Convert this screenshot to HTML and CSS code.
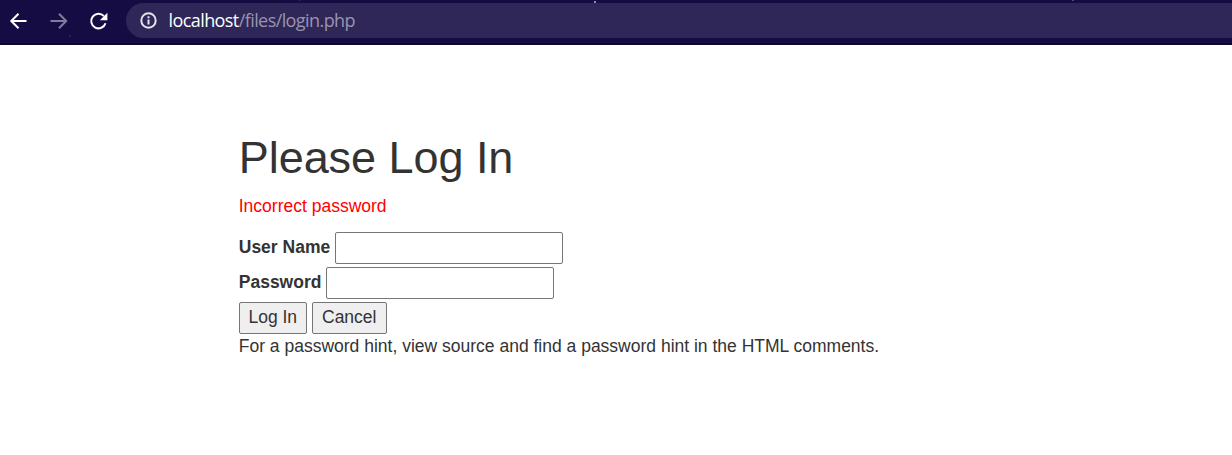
FILE: index.html
```html
<!DOCTYPE html>
<html lang="en">
<head>
<meta charset="utf-8">
<title>Login</title>
<link rel="stylesheet" href="styles.css">
</head>
<body>
<header class="toolbar">
  <nav class="nav">
    <svg class="icon" viewBox="0 0 20 20"><path d="M18.5 10H3M10.5 2.8 3.3 10l7.2 7.2"/></svg>
    <svg class="icon icon-dim" viewBox="0 0 20 20"><path d="M2.5 10H18M11 2.8l7.2 7.2-7.2 7.2"/></svg>
    <svg class="icon" viewBox="0 0 20 20"><path d="M17.5 12.2A7.3 7.3 0 1 1 15.9 5.1"/><path class="solid" d="M19.4 1.8v7.5h-7.5z"/></svg>
  </nav>
  <div class="address">
    <svg class="info" viewBox="0 0 18 18"><circle cx="8.5" cy="8.5" r="7.2"/><path d="M8.5 7.5v5M8.5 4.3v2"/></svg>
    <span class="url"><span class="host">localhost</span>/files/login.php</span>
  </div>
</header>
<main class="container">
  <h1 class="title">Please Log In</h1>
  <p class="error">Incorrect password</p>
  <form class="form">
    <div class="row"><label class="label" for="nam">User Name</label><input class="field" type="text" id="nam"></div>
    <div class="row"><label class="label" for="pw">Password</label><input class="field" type="password" id="pw"></div>
    <div class="actions"><button class="button login" type="button">Log In</button><button class="button cancel" type="button">Cancel</button></div>
  </form>
  <p class="hint">For a password hint, view source and find a password hint in the HTML comments.</p>
</main>
</body>
</html>
```
FILE: styles.css
```css
* { box-sizing: border-box; }
body {
  margin: 0;
  background: #fff;
  color: #333;
  font: 17.5px/25px "Liberation Sans", Arial, sans-serif;
  overflow: hidden;
}
/* starry theme: a few faint specks along the top edge */
.toolbar {
  display: flex;
  height: 45px;
  padding: 3px 0 0 8px;
  background:
    linear-gradient(#8f8bb5, #8f8bb5) 594px 1px / 2px 2px no-repeat,
    linear-gradient(#4d4678, #4d4678) 1072px 0 / 2px 1px no-repeat,
    linear-gradient(#3a3268, #3a3268) 299px 0 / 1px 1px no-repeat,
    linear-gradient(#2c2358, #2c2358) 69px 35px / 2px 2px no-repeat,
    #160c44;
  border-bottom: 2px solid #10062f;
}
.nav {
  display: flex;
  gap: 20px;
  width: 118px;
  height: 35px;
  align-items: center;
}
.icon {
  width: 20px;
  height: 20px;
  fill: none;
  stroke: #fff;
  stroke-width: 2;
}
.icon-dim { stroke: #827b9c; }
.solid { fill: #fff; stroke: none; }
.address {
  display: flex;
  flex: 1;
  align-items: center;
  height: 35px;
  padding-left: 14px;
  border-radius: 18px 0 0 18px;
  background: #2f2757;
}
.info {
  width: 18px;
  height: 18px;
  margin-right: 10.5px;
  fill: none;
  stroke: #e5e3ec;
  stroke-width: 2;
}
.url {
  color: #9994ae;
  font: 18px/24px "Open Sans", "Noto Sans", sans-serif;
  letter-spacing: -0.58px;
  padding-bottom: 1px;
  white-space: nowrap;
}
.host { color: #fff; }
.container { padding: 88px 0 0 238.75px; }
.title {
  margin: 0 0 12px;
  font-size: 45px;
  font-weight: 400;
  line-height: 49px;
  letter-spacing: -0.05px;
}
.error {
  margin: 0 0 13px;
  color: #f00;
}
.row {
  display: flex;
  gap: 4.5px;
  height: 35px;
}
.label {
  font-weight: 700;
  line-height: 30px;
}
.field {
  width: 228px;
  height: 32px;
  border: 1px solid #767676;
  border-radius: 2px;
  background: #fff;
}
.actions {
  display: flex;
  gap: 5px;
}
.button {
  height: 32px;
  padding: 0 0 2px;
  border: 1px solid #767676;
  border-radius: 2px;
  background: #efefef;
  color: #333;
  font: inherit;
}
.login { width: 68px; }
.cancel { width: 75px; }
.hint { margin: 0; }
```
